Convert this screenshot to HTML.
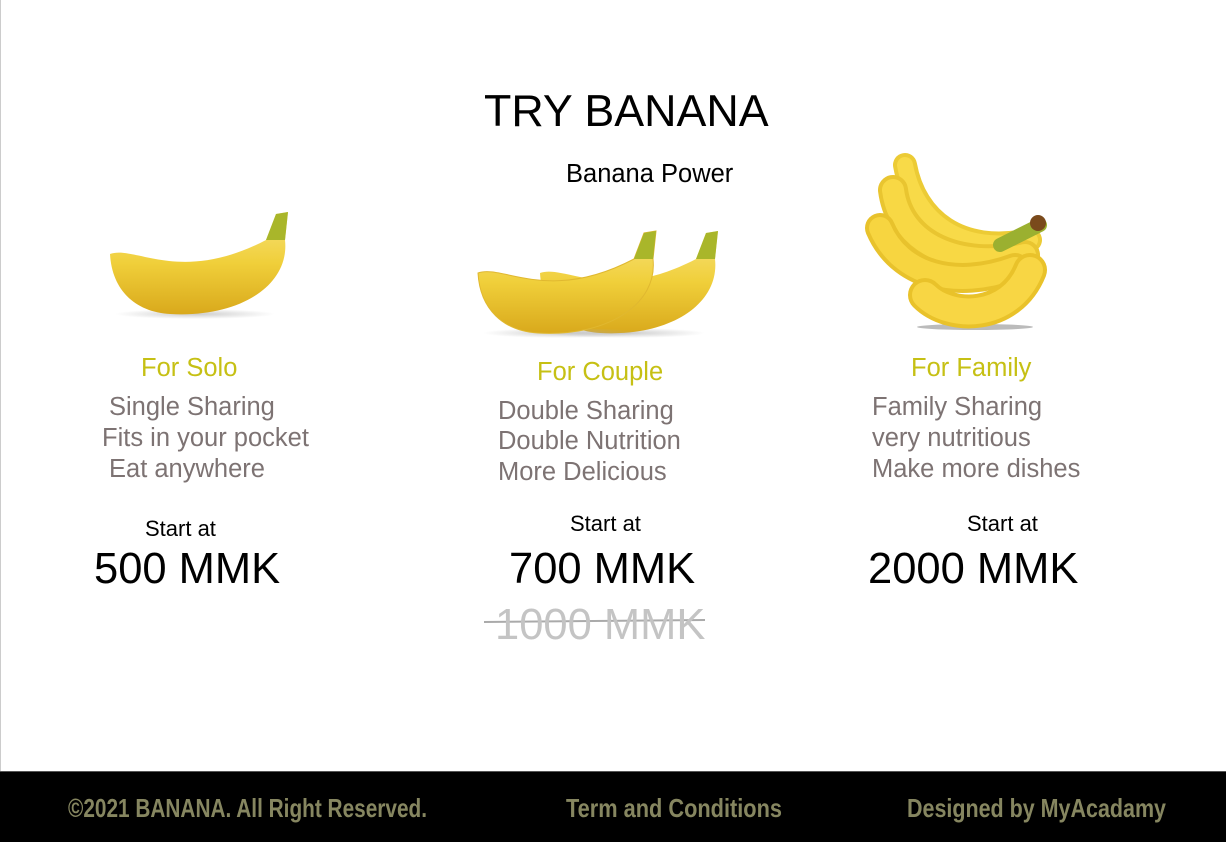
<!DOCTYPE html>
<html><head><meta charset="utf-8"><style>
html,body{margin:0;padding:0;width:1226px;height:842px;overflow:hidden;background:#fff;font-family:"Liberation Sans",Arial,sans-serif}
.t{position:absolute;white-space:nowrap;line-height:1}
.y{color:#c6c014;font-size:25.5px}
.g{color:#7d7373;font-size:25.5px}
.s{font-size:22px;color:#000}
.p{font-size:43.5px;color:#000}
</style></head><body>
<div style="position:absolute;left:0;top:0;width:1px;height:771px;background:#ccc"></div>
<svg style="position:absolute;left:0;top:0" width="1226" height="842">
<defs>
<linearGradient id="by" x1="0" y1="0" x2="0" y2="1">
<stop offset="0" stop-color="#f7e27a"/><stop offset=".5" stop-color="#f0cf3a"/><stop offset="1" stop-color="#d9a91c"/></linearGradient>
<radialGradient id="sh"><stop offset="0" stop-color="#aaa" stop-opacity=".6"/><stop offset="1" stop-color="#aaa" stop-opacity="0"/></radialGradient>
</defs>
<!-- solo -->
<ellipse cx="195" cy="314" rx="80" ry="5" fill="url(#sh)"/>
<path d="M110,254 C135,245 180,285 266,240 L276,214 L288,212 L285,240 C290,285 240,318 170,314 C135,312 112,290 110,254 Z" fill="url(#by)"/>
<path d="M266,240 L276,214 L288,212 L285,240 Z" fill="#a9b62a"/>
<!-- couple -->
<g transform="translate(430,19)">
<ellipse cx="195" cy="314" rx="80" ry="5" fill="url(#sh)"/>
<path d="M110,254 C135,245 180,285 266,240 L276,214 L288,212 L285,240 C290,285 240,318 170,314 C135,312 112,290 110,254 Z" fill="url(#by)"/>
<path d="M266,240 L276,214 L288,212 L285,240 Z" fill="#a9b62a"/></g>
<g transform="translate(368,19)">
<ellipse cx="195" cy="314" rx="80" ry="5" fill="url(#sh)"/>
<path d="M110,254 C135,245 180,285 266,240 L276,214 L288,212 L285,240 C290,285 240,318 170,314 C135,312 112,290 110,254 Z" fill="url(#by)" stroke="#e0b830" stroke-width="1"/>
<path d="M266,240 L276,214 L288,212 L285,240 Z" fill="#a9b62a"/></g>
<!-- family -->
<ellipse cx="975" cy="327" rx="58" ry="3" fill="#bbb"/>
<g fill="none" stroke-linecap="round">
<path d="M905,165 C915,220 960,255 1030,240" stroke="#eccb35" stroke-width="24"/>
<path d="M905,165 C915,220 960,255 1030,240" stroke="#f8da48" stroke-width="16"/>
<path d="M893,190 C900,245 960,270 1025,255" stroke="#e9c530" stroke-width="30"/>
<path d="M893,190 C900,245 960,270 1025,255" stroke="#f8d844" stroke-width="22"/>
<path d="M880,228 C900,275 955,290 1015,268" stroke="#e8c22c" stroke-width="30"/>
<path d="M880,228 C900,275 955,290 1015,268" stroke="#f7d540" stroke-width="22"/>
<path d="M925,295 C950,320 1010,320 1030,270" stroke="#e9c22a" stroke-width="34"/>
<path d="M925,295 C950,320 1010,320 1030,270" stroke="#f8d644" stroke-width="26"/>
<path d="M1000,245 L1040,225" stroke="#9bb030" stroke-width="14"/>
</g>
<circle cx="1038" cy="223" r="8" fill="#7a4a1c"/>
<!-- strike -->
<line x1="484" y1="622" x2="705" y2="620" stroke="#aaa" stroke-width="2"/>
<!-- footer -->
<rect x="0" y="771" width="1226" height="71" fill="#000"/>
<rect x="0" y="771" width="1226" height="1" fill="#555"/>
<g font-family="'Liberation Sans Narrow','Liberation Sans',sans-serif" font-weight="bold" font-size="26" fill="#868660">
<text x="68" y="817" textLength="359" lengthAdjust="spacingAndGlyphs">©2021 BANANA. All Right Reserved.</text>
<text x="566" y="817" textLength="216" lengthAdjust="spacingAndGlyphs">Term and Conditions</text>
<text x="907" y="817" textLength="259" lengthAdjust="spacingAndGlyphs">Designed by MyAcadamy</text>
</g>
</svg>
<div class="t" style="left:484px;top:89px;font-size:44.8px">TRY BANANA</div>
<div class="t" style="left:566px;top:162px;font-size:25.5px">Banana Power</div>

<div class="t y" style="left:141px;top:356px">For Solo</div>
<div class="t g" style="left:109px;top:395px">Single Sharing</div>
<div class="t g" style="left:102px;top:426px">Fits in your pocket</div>
<div class="t g" style="left:109px;top:457px">Eat anywhere</div>
<div class="t s" style="left:145px;top:518px">Start at</div>
<div class="t p" style="left:94px;top:548px">500 MMK</div>

<div class="t y" style="left:537px;top:360px">For Couple</div>
<div class="t g" style="left:498px;top:399px">Double Sharing</div>
<div class="t g" style="left:498px;top:429px">Double Nutrition</div>
<div class="t g" style="left:498px;top:460px">More Delicious</div>
<div class="t s" style="left:570px;top:513px">Start at</div>
<div class="t p" style="left:509px;top:548px">700 MMK</div>
<div class="t p" style="left:495px;top:604px;color:#c4c4c4">1000 MMK</div>

<div class="t y" style="left:911px;top:356px">For Family</div>
<div class="t g" style="left:872px;top:395px">Family Sharing</div>
<div class="t g" style="left:872px;top:426px">very nutritious</div>
<div class="t g" style="left:872px;top:457px">Make more dishes</div>
<div class="t s" style="left:967px;top:513px">Start at</div>
<div class="t p" style="left:868px;top:548px">2000 MMK</div>
</body></html>
